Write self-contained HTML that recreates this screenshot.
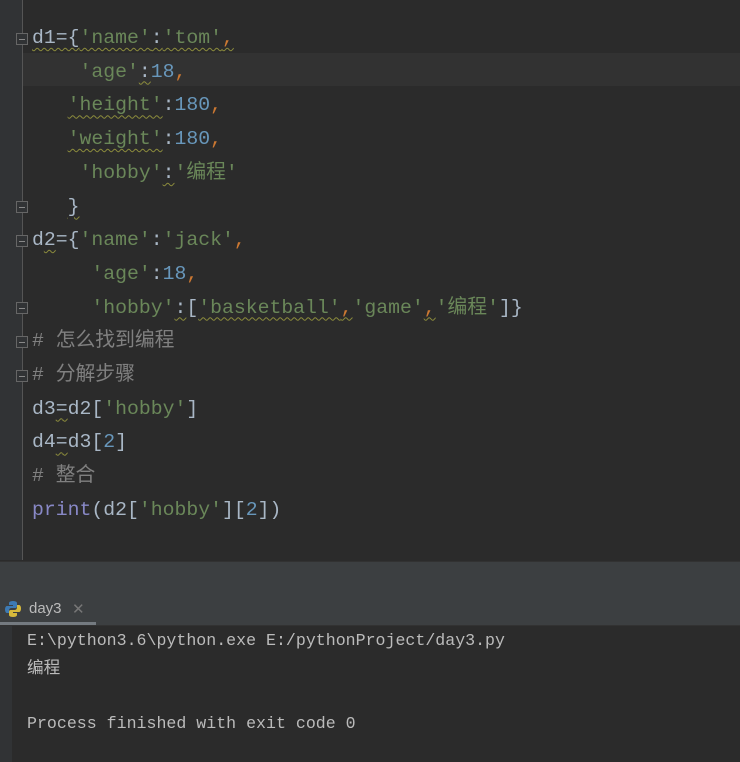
<!DOCTYPE html>
<html><head><meta charset="utf-8"><style>
body{margin:0;width:740px;height:762px;background:#2b2b2b;overflow:hidden;position:relative;font-family:"Liberation Mono","Noto Sans CJK SC",monospace}
.gut{position:absolute;left:0;top:0;width:22px;height:560px;background:#313335;border-right:1px solid #555}
.cur{position:absolute;left:23px;top:53px;width:717px;height:33px;background:#323232}
.code{position:absolute;left:32px;top:22px;font-size:19.8px;line-height:33.7px;color:#a9b7c6;white-space:pre}
.s{color:#6a8759}.n{color:#6897bb}.c{color:#cc7832}.m{color:#808080}.p{color:#8888c6}
.w{text-decoration:underline wavy #8c8c3c;text-decoration-thickness:1px;text-underline-offset:4px}
.fold{position:absolute;left:16px;width:12px;height:12px;border:1px solid #666;box-sizing:border-box;background:#313335}
.fold:after{content:"";position:absolute;left:2px;top:5px;width:6px;height:1px;background:#888}
.bar{position:absolute;left:0;top:561px;width:740px;height:31px;background:#3c3f41;border-top:1px solid #323232}
.tabs{position:absolute;left:0;top:592px;width:740px;height:33px;background:#3c3f41;border-bottom:1px solid #323232}
.tab{position:absolute;left:0;top:0;width:96px;height:33px}
.tab .ul{position:absolute;left:0;bottom:0;width:96px;height:3px;background:#747a80}
.tab .t{position:absolute;left:29px;top:8px;font-family:"Liberation Sans",sans-serif;font-size:15px;color:#bbb}
.tab .x{position:absolute;left:72px;top:8px;font-family:"Liberation Sans",sans-serif;font-size:15px;color:#777}
.cg{position:absolute;left:0;top:626px;width:12px;height:136px;background:#313335}
.con{position:absolute;left:27px;top:627px;font-size:16.6px;line-height:27.5px;color:#bbbbbb;white-space:pre}
</style></head><body>
<div class="gut"></div><div class="cur"></div>
<div class="fold" style="top:33px"></div>
<div class="fold" style="top:201px"></div>
<div class="fold" style="top:235px"></div>
<div class="fold" style="top:302px"></div>
<div class="fold" style="top:336px"></div>
<div class="fold" style="top:370px"></div>
<div class="code"><span class="w">d1={<span class="s">'name'</span>:<span class="s">'tom'</span><span class="c">,</span></span>
    <span class="s">'age'</span><span class="w">:</span><span class="n">18</span><span class="c">,</span>
   <span class="w"><span class="s">'height'</span></span>:<span class="n">180</span><span class="c">,</span>
   <span class="w"><span class="s">'weight'</span></span>:<span class="n">180</span><span class="c">,</span>
    <span class="s">'hobby'</span><span class="w">:</span><span class="s">'编程'</span>
   <span class="w">}</span>
d<span class="w">2</span>={<span class="s">'name'</span>:<span class="s">'jack'</span><span class="c">,</span>
     <span class="s">'age'</span>:<span class="n">18</span><span class="c">,</span>
     <span class="s">'hobby'</span><span class="w">:</span>[<span class="s w">'basketball'</span><span class="c w">,</span><span class="s">'game'</span><span class="c w">,</span><span class="s">'编程'</span>]}
<span class="m"># 怎么找到编程</span>
<span class="m"># 分解步骤</span>
d3<span class="w">=</span>d2[<span class="s">'hobby'</span>]
d4<span class="w">=</span>d3[<span class="n">2</span>]
<span class="m"># 整合</span>
<span class="p">print</span>(d2[<span class="s">'hobby'</span>][<span class="n">2</span>])</div>
<div class="bar"></div>
<div class="tabs"><div class="tab">
<svg style="position:absolute;left:4px;top:8px" width="18" height="18" viewBox="0 0 18 18"><path d="M9 1C5 1 5 3 5 3v2h4v1H3S1 6 1 9.5 3 13 3 13h2v-2.5S5 8 7.5 8h4S13 8 13 6V3s0-2-4-2z" fill="#3d7ab3"/><path d="M9 17c4 0 4-2 4-2v-2H9v-1h6s2 0 2-3.5S15 5 15 5h-2v2.5S13 10 10.5 10h-4S5 10 5 12v3s0 2 4 2z" fill="#d6b93c"/></svg>
<span class="t">day3</span><span class="x">✕</span><div class="ul"></div></div></div>
<div class="cg"></div>
<div class="con">E:\python3.6\python.exe E:/pythonProject/day3.py
编程

Process finished with exit code 0</div>
</body></html>
